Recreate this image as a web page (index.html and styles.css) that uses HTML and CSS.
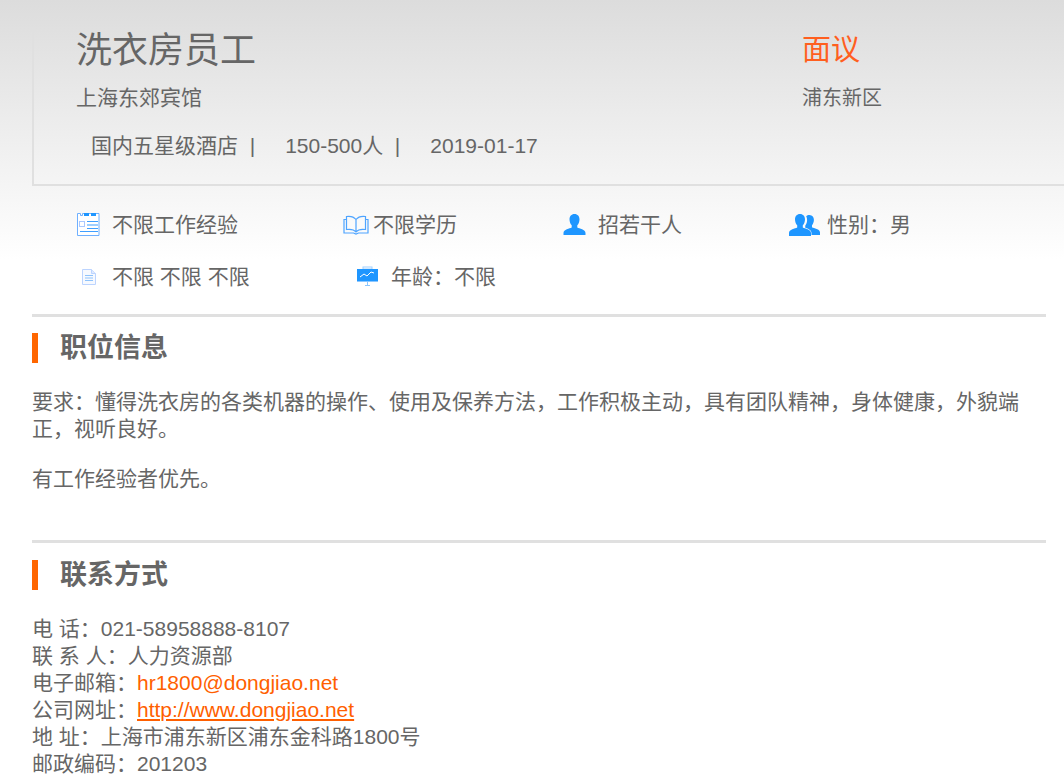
FILE: index.html
```html
<!DOCTYPE html>
<html lang="zh">
<head>
<meta charset="utf-8">
<title>洗衣房员工</title>
<link rel="stylesheet" href="styles.css">
</head>
<body>
<div class="top">
  <div class="summary">
    <div class="summary-main">
      <h1 class="job-title">洗衣房员工</h1>
      <p class="company">上海东郊宾馆</p>
      <p class="meta"><span class="meta-a">国内五星级酒店 &nbsp;|</span><span class="meta-b">150-500人 &nbsp;|</span><span class="meta-c">2019-01-17</span></p>
    </div>
    <div class="summary-side">
      <div class="salary">面议</div>
      <p class="area">浦东新区</p>
    </div>
  </div>
  <div class="facts">
    <div class="fact-row r1">
      <div class="fact f1">
        <svg class="ic" width="25" height="25" viewBox="0 0 25 25"><path d="M1.500 1.500h3v2h2v-2h12v2h1v-2h3.500v22h-21.500z" fill="#fff" stroke="#6fb0ff" stroke-width="1"/><rect x="8" y="1" width="5" height="3" fill="#1e96ff"/><rect x="15" y="1" width="5" height="3" fill="#1e96ff"/><rect x="3.500" y="9.500" width="5" height="5" fill="none" stroke="#a9c8ff"/><path d="M11 9.500h11M11 13h11M11 16.500h11M4 19.500h18" stroke="#3f9fff" stroke-width="1"/></svg>
        <span class="t1">不限工作经验</span>
      </div>
      <div class="fact f2">
        <svg class="ic" width="26" height="20" viewBox="0 0 26 20"><path d="M13 4.500C11 2 7 1 3.500 1.500v13C7 14 11 14.500 13 17 15 14.500 19 14 22.500 14.500v-13C19 1 15 2 13 4.500zM13 4.500V17M3 4.500H1v13.500h9.500l2.500 1 2.500-1H25V4.500h-2" fill="none" stroke="#4ea4ff" stroke-width="1.200"/></svg>
        <span class="t2">不限学历</span>
      </div>
      <div class="fact f3">
        <svg class="ic" width="23" height="23" viewBox="0 0 23 23"><path d="M11.500 1c3.200 0 5 2.300 5 5.200 0 2.600-.9 4.700-2.200 6v2.300c2 1.200 8.200 1.800 8.200 5.500v2h-22v-2c0-3.700 6.200-4.300 8.200-5.500v-2.300c-1.300-1.300-2.200-3.400-2.200-6C6.500 3.300 8.300 1 11.500 1z" fill="#1e96ff"/></svg>
        <span class="t3">招若干人</span>
      </div>
      <div class="fact f4">
        <svg class="ic" width="31" height="23" viewBox="0 0 31 23"><path d="M20.500 2c3 0 4.400 2.200 4.400 4.800 0 2.300-.8 4.200-1.900 5.400v2c1.800 1.100 8 1.600 8 5.300v2.500h-8.500v-2c0-3-3-4.300-6.500-5.600.3-.4.300-1 .3-1.900 1.200-1.400 1.800-3.400 1.800-5.500 0-1.500-.3-2.800-.9-3.700C18 2.500 19 2 20.500 2z" fill="#1e96ff"/><path d="M11 1c3.200 0 5 2.300 5 5.200 0 2.600-.9 4.700-2.200 6v2.300c2 1.200 8.200 1.800 8.200 5.500v3H0v-3c0-3.700 6.200-4.300 8.200-5.500v-2.300C6.900 10.900 6 8.800 6 6.200 6 3.300 7.800 1 11 1z" fill="#1e96ff"/></svg>
        <span class="t4">性别：男</span>
      </div>
    </div>
    <div class="fact-row r2">
      <div class="fact f5">
        <svg class="ic" width="16" height="18" viewBox="0 0 16 18"><path d="M1.500 1.500h9l4 4v11h-13z" fill="#f6f9ff" stroke="#bcd4ff"/><path d="M10.500 1.500v4h4" fill="#dfeaff" stroke="#bcd4ff"/><path d="M4 7.500h8M4 10h8M4 12.500h8" stroke="#8fc3fb"/></svg>
        <span class="t5">不限 不限 不限</span>
      </div>
      <div class="fact f6">
        <svg class="ic" width="21" height="21" viewBox="0 0 21 21"><rect x="6" y="1" width="9" height="2" fill="none" stroke="#9fd0ff"/><rect x="0" y="3" width="21" height="12" fill="#1e96ff"/><path d="M3 11l4-3 3 2 4-4 3 1" fill="none" stroke="#fff" stroke-width="1"/><path d="M0 15.500h21M10.500 15v4.500M8 19.500h5" stroke="#8cc7ff"/></svg>
        <span class="t6">年龄：不限</span>
      </div>
    </div>
  </div>
</div>
<div class="content">
  <section class="sec sec-info">
    <h2 class="sec-title">职位信息</h2>
    <p class="para">要求：懂得洗衣房的各类机器的操作、使用及保养方法，工作积极主动，具有团队精神，身体健康，外貌端正，视听良好。</p>
    <p class="para">有工作经验者优先。</p>
  </section>
  <section class="sec sec-contact">
    <h2 class="sec-title">联系方式</h2>
    <div class="contact">
      <div>电 话：021-58958888-8107</div>
      <div>联 系 人：人力资源部</div>
      <div>电子邮箱：<span class="hl">hr1800@dongjiao.net</span></div>
      <div>公司网址：<a class="hl" href="#">http://www.dongjiao.net</a></div>
      <div>地 址：上海市浦东新区浦东金科路1800号</div>
      <div>邮政编码：201203</div>
    </div>
  </section>
</div>
</body>
</html>
```
FILE: styles.css
```css
* { box-sizing: border-box; }
html, body { margin: 0; padding: 0; }
body {
  width: 1064px;
  height: 782px;
  overflow: hidden;
  background: #fff;
  color: #666;
  font-family: "Liberation Sans", "Noto Sans CJK SC", sans-serif;
  font-size: 21px;
  line-height: 27px;
}
.top {
  height: 314px;
  padding: 28px 0 0 32px;
  background: linear-gradient(to bottom, #dcdcdc 0, #fff 260px);
}
.summary {
  display: flex;
  height: 158px;
  padding-left: 42px;
  border-left: 2px solid #e0e0e0;
  border-bottom: 2px solid #e0e0e0;
}
.summary-main { width: 726px; }
.job-title { margin: 0; font-size: 36px; line-height: 46px; font-weight: 400; }
.company { margin: 10px 0 0; }
.meta { margin: 21px 0 0 15px; }
.meta-b { margin-left: 30px; }
.meta-c { margin-left: 30px; }
.salary { font-size: 29px; line-height: 44px; color: #ff5f1f; }
.area { margin: 13px 0 0; font-size: 20px; }
.facts { padding-top: 25px; }
.fact-row { display: flex; height: 52px; }
.fact { display: flex; align-items: center; height: 27px; }
.r1 { padding-left: 44px; }
.r2 { padding-left: 49px; }
.f1 { width: 267px; }
.f2 { width: 220px; }
.f3 { width: 226px; }
.f5 { width: 276px; }
.t1 { margin-left: 11px; }
.t2 { margin-left: 4px; }
.t3 { margin-left: 12px; }
.t4 { margin-left: 7px; }
.t5 { margin-left: 15px; }
.t6 { margin-left: 13px; }
.content { margin: 0 18px 0 32px; }
.sec { border-top: 3px solid #e0e0e0; }
.sec-info { height: 226px; }
.sec-title {
  margin: 17px 0 0;
  padding-left: 22px;
  height: 30px;
  border-left: 6px solid #ff6600;
  font-size: 27px;
  line-height: 30px;
  font-weight: 700;
}
.sec-info .sec-title { margin-top: 16px; }
.para { margin: 25px 0 0; }
.para + .para { margin-top: 23px; }
.contact { margin-top: 25px; }
.hl { color: #ff5f00; }
```
